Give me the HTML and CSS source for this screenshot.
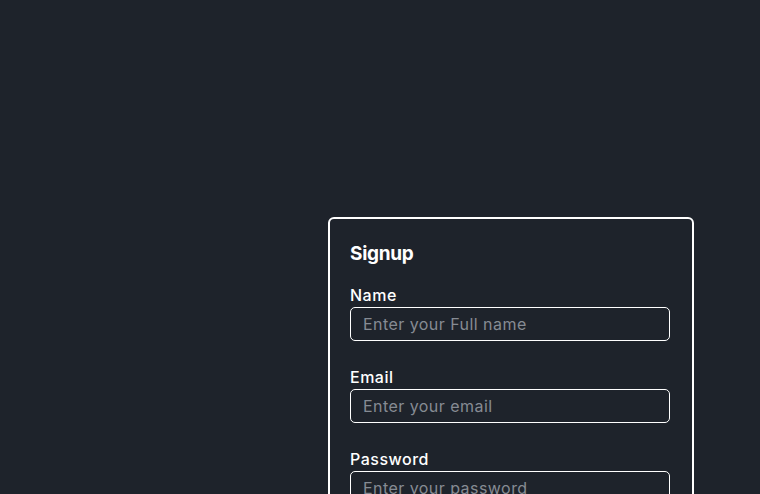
FILE: index.html
```html
<!DOCTYPE html>
<html>
<head>
<meta charset="utf-8">
<link rel="stylesheet" href="styles.css">
</head>
<body>
<main class="page">
  <form class="card">
    <h2 class="title">Signup</h2>
    <div class="field">
      <label class="label" for="name">Name</label>
      <input class="input" id="name" type="text" placeholder="Enter your Full name">
    </div>
    <div class="field">
      <label class="label" for="email">Email</label>
      <input class="input" id="email" type="email" placeholder="Enter your email">
    </div>
    <div class="field">
      <label class="label" for="password">Password</label>
      <input class="input" id="password" type="password" placeholder="Enter your password">
    </div>
  </form>
</main>
</body>
</html>
```
FILE: styles.css
```css
* { box-sizing: border-box; }
html, body {
  margin: 0;
  background: #1e232b;
  height: 100%;
  overflow: hidden;
}
body {
  font-family: Inter, "Noto Sans", sans-serif;
  color: #ffffff;
}
.page {
  padding: 217px 0 0 328px;
}
.card {
  width: 366px;
  border: 2px solid #ffffff;
  border-radius: 6px;
  padding: 21px 20px 20px;
}
.title {
  margin: 0 0 17px;
  font-size: 19px;
  font-weight: 700;
  line-height: 28px;
  letter-spacing: -0.3px;
}
.field {
  display: flex;
  flex-direction: column;
  margin-bottom: 26px;
}
.label {
  font-size: 16px;
  font-weight: 500;
  line-height: 20px;
  margin-bottom: 2px;
  letter-spacing: 0.5px;
}
.input {
  width: 320px;
  height: 34px;
  border: 1px solid #ffffff;
  border-radius: 5px;
  background: transparent;
  padding: 0 12px;
  font-family: Inter, "Noto Sans", sans-serif;
  font-size: 16px;
  letter-spacing: 0.45px;
  color: #ffffff;
  outline: none;
}
.input::placeholder {
  color: #868b93;
}
```
